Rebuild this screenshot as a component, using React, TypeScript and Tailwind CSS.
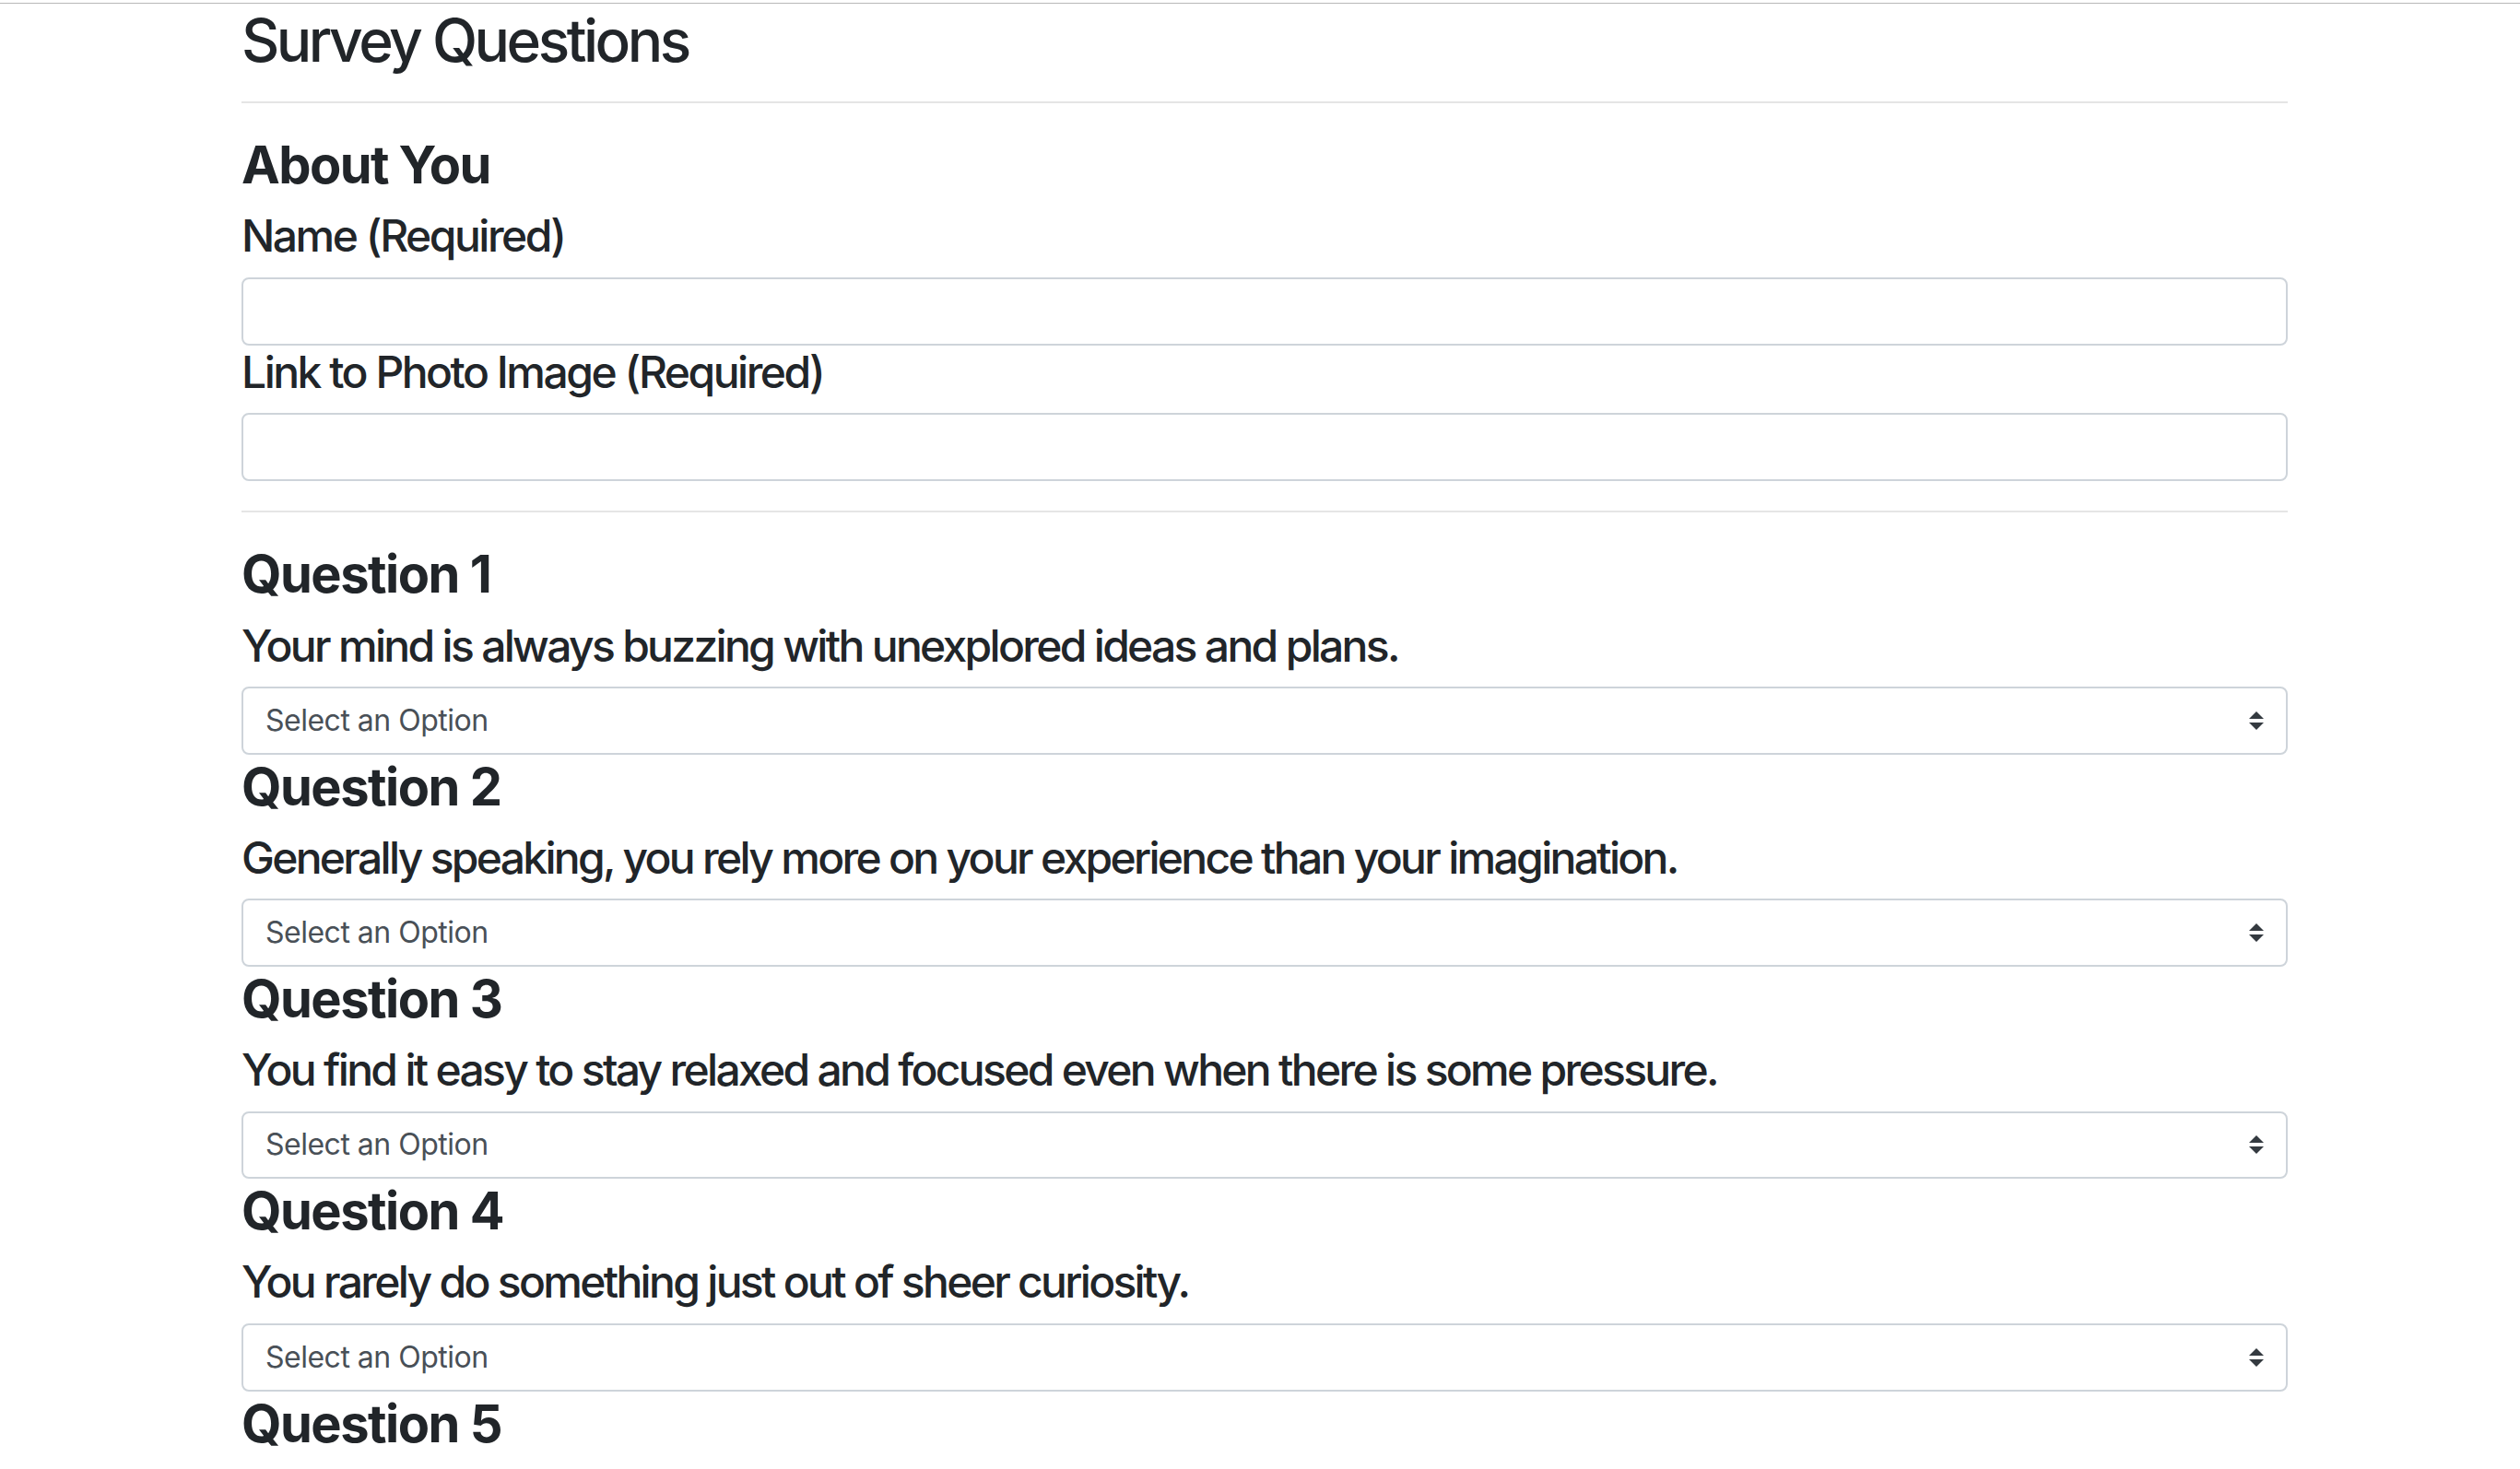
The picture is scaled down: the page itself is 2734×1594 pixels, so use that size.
const questions = [
  "Your mind is always buzzing with unexplored ideas and plans.",
  "Generally speaking, you rely more on your experience than your imagination.",
  "You find it easy to stay relaxed and focused even when there is some pressure.",
  "You rarely do something just out of sheer curiosity.",
  "You often feel overwhelmed by the amount of things you need to do.",
]

function Arrows() {
  return (
    <svg className="pointer-events-none absolute right-[26px] top-1/2 h-[20px] w-[16px] -translate-y-1/2" viewBox="0 0 4 5">
      <path fill="#343a40" d="M2 0L0 2h4zm0 5L0 3h4z" />
    </svg>
  )
}

function SelectBox() {
  return (
    <div className="relative">
      <select
        defaultValue=""
        className="block h-[73.5px] w-full appearance-none rounded-[8px] border-2 border-[#ced4da] bg-white pl-[24px] pr-[56px] text-[32px] leading-[1.5] tracking-[-0.5px] text-[#495057] outline-none"
      >
        <option value="">Select an Option</option>
        <option>1 (Strongly Disagree)</option>
        <option>2</option>
        <option>3</option>
        <option>4</option>
        <option>5 (Strongly Agree)</option>
      </select>
      <Arrows />
    </div>
  )
}

export default function App() {
  return (
    <div className="h-[1594px] overflow-hidden bg-white pt-[3px] text-[#212529] [font-family:Inter,'Noto_Sans',sans-serif]">
      <div className="border-t border-[#b8b8b8]"></div>
      <div className="ml-[262px] w-[2220px]">
        <h2 className="pt-[6px] text-[64px] leading-[68px] font-medium tracking-[-3.5px]">Survey Questions</h2>
        <hr className="my-8 border-t-2 border-[#e5e5e5]" />

        <h3 className="mb-[14px] pt-[2px] text-[56px] leading-[1.2] font-bold tracking-[-1.6px]">About You</h3>
        <h4 className="mb-4 text-[48px] leading-[1.2] font-medium tracking-[-2.5px]">Name (Required)</h4>
        <input className="block h-[74px] w-full rounded-[8px] border-2 border-[#ced4da] px-[24px] text-[32px] outline-none" />
        <h4 className="mb-4 text-[48px] leading-[1.2] font-medium tracking-[-2.5px]">Link to Photo Image (Required)</h4>
        <input className="block h-[74px] w-full rounded-[8px] border-2 border-[#ced4da] px-[24px] text-[32px] outline-none" />

        <hr className="my-8 border-t-2 border-[#e5e5e5]" />

        {questions.map((q, i) => (
          <div key={i}>
            <h3 className="mb-[14px] pt-[2px] text-[56px] leading-[1.2] font-bold tracking-[-1.5px]">Question {i + 1}</h3>
            <h4 className="mb-4 text-[48px] leading-[1.2] font-medium tracking-[-2.7px]">{q}</h4>
            <SelectBox />
          </div>
        ))}
      </div>
    </div>
  )
}
